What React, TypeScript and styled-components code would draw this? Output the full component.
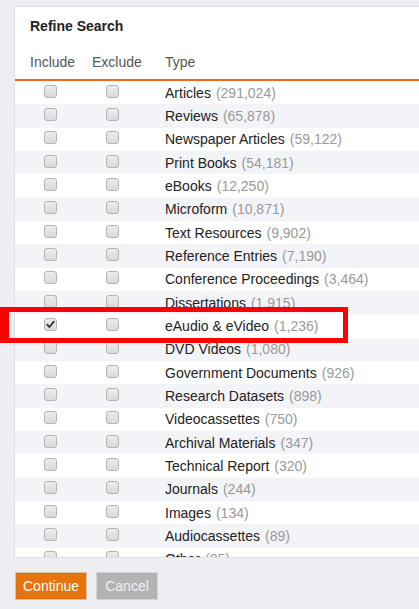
import React from "react";
import styled, { createGlobalStyle } from "styled-components";

const Global = createGlobalStyle`
  html, body { margin: 0; padding: 0; }
  body {
    background: #eceef1;
    font-family: "Liberation Sans", Arial, sans-serif;
    width: 419px;
    height: 609px;
    overflow: hidden;
    position: relative;
  }
`;

const Page = styled.div`
  position: relative;
  padding: 6px 0 0 14px;
`;

const Panel = styled.div`
  background: #fff;
  border: 1px solid #dcdfe3;
  border-right: none;
  width: 420px;
`;

const Title = styled.div`
  padding: 9px 0 0 15px;
  line-height: 20px;
  font-size: 14px;
  font-weight: bold;
  color: #222;
`;

const Grid = styled.div`
  display: grid;
  grid-template-columns: 70px 54px 1fr;
  align-items: center;
`;

const HeaderRow = styled(Grid)`
  margin-top: 15px;
  padding: 1px 0 7px;
  line-height: 20px;
  font-size: 14px;
  color: #555;
  border-bottom: 2px solid #f56a18;
`;

const HeadCell = styled.div<{ $pad: number }>`
  padding-left: ${(p) => p.$pad}px;
`;

const List = styled.div`
  height: 476px;
  overflow: hidden;
`;

const Row = styled(Grid)<{ $alt: boolean }>`
  height: 23.33px;
  background: ${(p) => (p.$alt ? "#f3f4f7" : "#ffffff")};
  font-size: 14px;
`;

const BoxCell = styled.div`
  display: flex;
  justify-content: center;
  align-items: center;
  margin-top: -3px;
`;

const Box = styled.span`
  width: 11px;
  height: 11px;
  border: 1px solid #b3b3b3;
  border-radius: 3px;
  background: linear-gradient(#ececec, #dadada);
  display: flex;
  align-items: center;
  justify-content: center;
`;

const TypeCell = styled.div`
  padding-left: 26px;
  white-space: nowrap;
  color: #222;
`;

const Count = styled.span`
  color: #999;
  margin-left: 5px;
`;

const Buttons = styled.div`
  display: flex;
  gap: 9px;
  margin: 14px 0 0 1px;
`;

const Btn = styled.button<{ $primary?: boolean }>`
  font-family: "Liberation Sans", Arial, sans-serif;
  font-size: 14px;
  height: 28px;
  padding: 0 7px;
  border: 1px solid ${(p) => (p.$primary ? "#d8c2b0" : "#d4d4d4")};
  box-shadow: inset 0 0 0 1px ${(p) => (p.$primary ? "#e46e0d" : "#b3b3b3")};
  background: ${(p) => (p.$primary ? "#e8720c" : "#b3b3b3")};
  color: ${(p) => (p.$primary ? "#fff" : "#f2f2f2")};
  width: ${(p) => (p.$primary ? "72px" : "62px")};
`;

const Highlight = styled.div`
  position: absolute;
  left: 0;
  top: 307px;
  width: 348px;
  height: 36px;
  box-sizing: border-box;
  border: 5px solid #ff0000;
  border-left-width: 9px;
  pointer-events: none;
`;

const items: [string, string][] = [
  ["Articles", "291,024"],
  ["Reviews", "65,878"],
  ["Newspaper Articles", "59,122"],
  ["Print Books", "54,181"],
  ["eBooks", "12,250"],
  ["Microform", "10,871"],
  ["Text Resources", "9,902"],
  ["Reference Entries", "7,190"],
  ["Conference Proceedings", "3,464"],
  ["Dissertations", "1,915"],
  ["eAudio & eVideo", "1,236"],
  ["DVD Videos", "1,080"],
  ["Government Documents", "926"],
  ["Research Datasets", "898"],
  ["Videocassettes", "750"],
  ["Archival Materials", "347"],
  ["Technical Report", "320"],
  ["Journals", "244"],
  ["Images", "134"],
  ["Audiocassettes", "89"],
  ["Other", "85"],
];

const Check = () => (
  <svg width="9" height="9" viewBox="0 0 9 9">
    <path d="M1.2 4.6 L3.4 7 L7.8 1.6" stroke="#333" strokeWidth="1.8" fill="none" strokeLinecap="round" strokeLinejoin="round" />
  </svg>
);

export default function App() {
  return (
    <>
      <Global />
      <Page>
        <Panel>
          <Title>Refine Search</Title>
          <HeaderRow>
            <HeadCell $pad={15}>Include</HeadCell>
            <HeadCell $pad={7}>Exclude</HeadCell>
            <HeadCell $pad={26}>Type</HeadCell>
          </HeaderRow>
          <List>
            {items.map(([name, count], i) => (
              <Row key={name} $alt={i % 2 === 1}>
                <BoxCell>
                  <Box>{name === "eAudio & eVideo" ? <Check /> : null}</Box>
                </BoxCell>
                <BoxCell>
                  <Box />
                </BoxCell>
                <TypeCell>
                  {name}
                  <Count>({count})</Count>
                </TypeCell>
              </Row>
            ))}
          </List>
        </Panel>
        <Buttons>
          <Btn $primary>Continue</Btn>
          <Btn>Cancel</Btn>
        </Buttons>
      </Page>
      <Highlight />
    </>
  );
}
